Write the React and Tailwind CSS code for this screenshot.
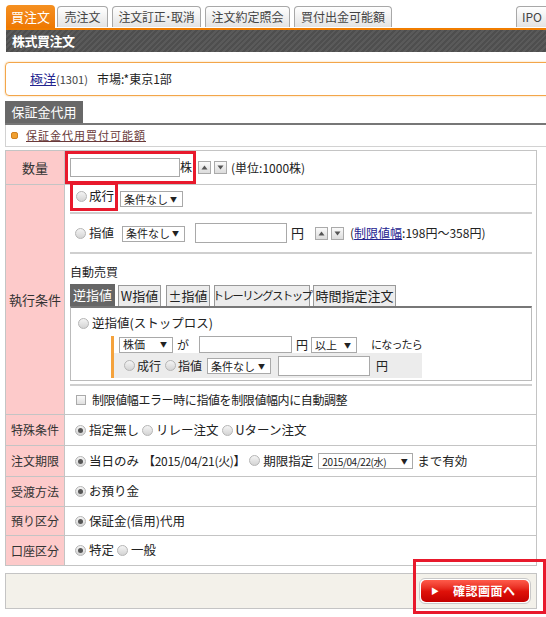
import React from 'react';

const Radio = ({ checked }) => (
  <span className="inline-flex items-center justify-center w-[11px] h-[11px] rounded-full border border-[#b5b5b5] bg-linear-to-b from-[#f4f4f4] to-[#d4d4d4] shrink-0">
    {checked && <span className="w-[5px] h-[5px] rounded-full bg-[#555]"></span>}
  </span>
);

const Select = ({ label, w, small }) => (
  <span
    className={`inline-flex items-center justify-between h-[16px] border border-[#a9a9a9] bg-white pl-[3px] pr-[5px] text-[#222] whitespace-nowrap shrink-0 ${small ? 'text-[10px] tracking-[-0.4px]' : 'text-[11px]'} ${w}`}
  >
    <span>{label}</span>
    <span className="text-[7px]">▼</span>
  </span>
);

const Spin = ({ up }) => (
  <span className="inline-flex items-center justify-center w-[13px] h-[13px] border border-[#aaa] bg-linear-to-b from-[#fafafa] to-[#dcdcdc] shrink-0">
    <svg width="7" height="5" viewBox="0 0 7 5">
      {up ? <path d="M0.5 4.5 L3.5 0.5 L6.5 4.5 Z" fill="#555" /> : <path d="M0.5 0.5 L3.5 4.5 L6.5 0.5 Z" fill="#555" />}
    </svg>
  </span>
);

const Tab = ({ children, active, className = '' }) => (
  <div
    className={`shrink-0 whitespace-nowrap flex items-center justify-center rounded-t-[4px] leading-none ${
      active
        ? 'h-[23px] bg-linear-to-b from-[#f59020] to-[#ee7800] text-white text-[13px]'
        : 'h-[21px] mb-[1px] border border-b-0 border-[#a8a8a8] bg-linear-to-b from-white to-[#e3e3e3] text-[#444] text-[12px]'
    } ${className}`}
  >
    {children}
  </div>
);

// h is the label cell height; the bottom border adds 1px
const Row = ({ label, h, children, last, small }) => (
  <div className={`flex ${last ? '' : 'border-b border-[#c4c4c4]'}`}>
    <div className={`w-[59px] shrink-0 bg-[#fdcaca] border-r border-[#c4c4c4] flex items-center justify-center text-[#333] whitespace-nowrap ${small ? 'text-[12px]' : 'text-[13px]'} ${h}`}>
      {label}
    </div>
    <div className="flex-1 min-w-0">{children}</div>
  </div>
);

export default function App() {
  return (
    <div className="w-[546px] h-[617px] overflow-hidden bg-white text-[#222] font-['Meiryo','Noto_Sans_CJK_JP',sans-serif] text-[12px]">
      <div className="pl-[6px] w-[570px]">
        {/* Tabs */}
        <div className="flex items-end h-[28px]">
          <Tab active className="w-[49px]">買注文</Tab>
          <Tab className="ml-[2px] w-[51px]">売注文</Tab>
          <Tab className="ml-[4px] w-[89px] tracking-[-0.3px]">注文訂正･取消</Tab>
          <Tab className="ml-[4px] w-[85px]">注文約定照会</Tab>
          <Tab className="ml-[4px] w-[98px]">買付出金可能額</Tab>
          <Tab className="ml-[124px] w-[44px] justify-start pl-[5px]">IPO</Tab>
        </div>
        {/* Header bar */}
        <div className="h-[24px] border-t-[2px] border-[#f07d00] bg-[repeating-linear-gradient(135deg,#5a5a5a_0px,#5a5a5a_2px,#4e4e4e_2px,#4e4e4e_4px)] flex items-center pl-[6px]">
          <span className="text-white font-bold text-[13px] tracking-[-0.5px]">株式買注文</span>
        </div>
      </div>

      <div className="pl-[5px] w-[570px]">
        {/* Stock info */}
        <div className="mt-[10px] h-[34px] border border-[#f3a64a] rounded-[4px] flex items-center pl-[24px] shadow-[0_0_2px_#f8c98a]">
          <span className="text-[#24248f] underline text-[13px]">極洋</span>
          <span className="text-[11px] text-[#444]">(1301)</span>
          <span className="ml-[9px] text-[12px] text-[#222]">市場:*東京1部</span>
        </div>

        {/* Sub tab */}
        <div className="mt-[5px] border-b-[2px] border-[#777]">
          <div className="w-[78px] h-[22px] bg-[#686868] text-white text-[13px] flex items-center justify-center">保証金代用</div>
        </div>
        <div className="h-[22px] border-x border-b border-[#d2d2d2] flex items-center pl-[5px]">
          <span className="w-[7px] h-[7px] rounded-[2px] bg-[#f0a030] border border-[#d08020]"></span>
          <span className="ml-[8px] text-[11px] text-[#6a3a3a] underline tracking-[1px]">保証金代用買付可能額</span>
        </div>
      </div>

      <div className="pl-[5px] w-[537px]">
        {/* Order table */}
        <div className="mt-[3px] border border-[#c4c4c4]">
          <Row label="数量" h="h-[33px]">
            <div className="h-full flex items-center whitespace-nowrap">
              <div className="-mt-[1px] h-[33px] border-[3px] border-[#e8192c] flex items-center pl-[2px] pr-[1px]">
                <span className="w-[110px] h-[19px] border border-[#a9a9a9] bg-white"></span>
                <span className="text-[12px] text-[#222]">株</span>
              </div>
              <span className="ml-[2px] flex gap-[3px]">
                <Spin up />
                <Spin />
              </span>
              <span className="ml-[4px] text-[12px] text-[#222]">(単位:1000株)</span>
            </div>
          </Row>

          <Row label="執行条件" h="h-[229px]">
            <div className="pl-[5px] pr-[4px] text-[13px] text-[#222] whitespace-nowrap">
              <div className="h-[27px] flex items-center">
                <div className="-mt-[4px] h-[29px] w-[48px] border-[3px] border-[#e8192c] flex items-center gap-[2px] pl-[3px]">
                  <Radio />
                  <span className="text-[12.5px]">成行</span>
                </div>
                <span className="ml-[2px]"><Select label="条件なし" w="w-[63px]" /></span>
              </div>
              <div className="h-[2px] bg-[#cfcfcf]"></div>
              <div className="h-[38px] flex items-center pl-[5px]">
                <Radio />
                <span className="ml-[3px] text-[12.5px]">指値</span>
                <span className="ml-[8px]"><Select label="条件なし" w="w-[63px]" /></span>
                <span className="ml-[10px] w-[92px] h-[20px] border border-[#a9a9a9] bg-white"></span>
                <span className="ml-[4px]">円</span>
                <span className="ml-[11px] flex gap-[3px]">
                  <Spin up />
                  <Spin />
                </span>
                <span className="ml-[6px] text-[12px]">(<span className="text-[#24248f] underline">制限値幅</span>:198円～358円)</span>
              </div>
              <div className="h-[2px] bg-[#cfcfcf]"></div>
              <div className="pt-[10px] text-[12px] leading-[16px]">自動売買</div>
              <div className="mt-[4px] flex items-end gap-[3px]">
                <div className="w-[45px] h-[22px] bg-[#666] text-white flex items-center justify-center">逆指値</div>
                <div className="w-[43px] h-[21px] bg-[#ececec] border border-b-0 border-[#999] flex items-center justify-center">W指値</div>
                <div className="ml-[2px] w-[44px] h-[21px] bg-[#ececec] border border-b-0 border-[#999] flex items-center justify-center">±指値</div>
                <div className="ml-[1px] w-[96px] h-[21px] bg-[#ececec] border border-b-0 border-[#999] flex items-center justify-center text-[11.5px] tracking-[-1.6px]">トレーリングストップ</div>
                <div className="w-[83px] h-[21px] bg-[#ececec] border border-b-0 border-[#999] flex items-center justify-center">時間指定注文</div>
              </div>
              <div className="border-t-[2px] border-[#777] border-x border-b border-x-[#bbb] border-b-[#bbb] h-[75px] pt-[6px]">
                <div className="flex items-center pl-[7px] h-[18px]">
                  <Radio />
                  <span className="ml-[3px] text-[12.5px]">逆指値(ストップロス)</span>
                </div>
                <div className="ml-[40px] mt-[4px] border-l-[3px] border-[#f4a23c] w-[311px] text-[12px]">
                  <div className="h-[17px] flex items-center pl-[5px]">
                    <Select label="株価" w="w-[54px]" />
                    <span className="ml-[4px]">が</span>
                    <span className="ml-[10px] w-[93px] h-[17px] border border-[#a9a9a9] bg-white"></span>
                    <span className="ml-[4px]">円</span>
                    <span className="ml-[3px]"><Select label="以上" w="w-[46px]" /></span>
                    <span className="ml-[14px] text-[11px] tracking-[-0.8px]">になったら</span>
                  </div>
                  <div className="h-[25px] bg-[#ececec] flex items-center pl-[10px]">
                    <Radio />
                    <span className="ml-[2px]">成行</span>
                    <span className="ml-[4px]"><Radio /></span>
                    <span className="ml-[2px]">指値</span>
                    <span className="ml-[5px]"><Select label="条件なし" w="w-[64px]" /></span>
                    <span className="ml-[7px] w-[92px] h-[20px] border border-[#a9a9a9] bg-white"></span>
                    <span className="ml-[6px]">円</span>
                  </div>
                </div>
              </div>
              <div className="mt-[3px] h-[2px] bg-[#cfcfcf]"></div>
              <div className="h-[28px] flex items-center pl-[6px] text-[12px]">
                <span className="w-[10px] h-[10px] border border-[#aaa] bg-linear-to-b from-[#fafafa] to-[#e0e0e0]"></span>
                <span className="ml-[6px] tracking-[-0.4px]">制限値幅エラー時に指値を制限値幅内に自動調整</span>
              </div>
            </div>
          </Row>

          <Row label="特殊条件" h="h-[30px]" small>
            <div className="h-full flex items-center pl-[10px] text-[12.5px] text-[#222] gap-[3px] whitespace-nowrap">
              <Radio checked />
              <span>指定無し</span>
              <Radio />
              <span>リレー注文</span>
              <Radio />
              <span>Uターン注文</span>
            </div>
          </Row>
          <Row label="注文期限" h="h-[30px]" small>
            <div className="h-full flex items-center pl-[10px] text-[12.5px] text-[#222] whitespace-nowrap">
              <Radio checked />
              <span className="ml-[3px]">当日のみ</span>
              <span className="ml-[4px] text-[12px] tracking-[-0.3px]">【2015/04/21(火)】</span>
              <span className="ml-[4px]"><Radio /></span>
              <span className="ml-[3px]">期限指定</span>
              <span className="ml-[5px]"><Select label="2015/04/22(水)" w="w-[95px]" small /></span>
              <span className="ml-[4px]">まで有効</span>
            </div>
          </Row>
          <Row label="受渡方法" h="h-[29px]" small>
            <div className="h-full flex items-center pl-[10px] text-[12.5px] text-[#222] gap-[3px]">
              <Radio checked />
              <span>お預り金</span>
            </div>
          </Row>
          <Row label="預り区分" h="h-[28px]" small>
            <div className="h-full flex items-center pl-[10px] text-[12.5px] text-[#222] gap-[3px]">
              <Radio checked />
              <span>保証金(信用)代用</span>
            </div>
          </Row>
          <Row label="口座区分" h="h-[29px]" small last>
            <div className="h-full flex items-center pl-[10px] text-[12.5px] text-[#222] gap-[3px]">
              <Radio checked />
              <span>特定</span>
              <Radio />
              <span>一般</span>
            </div>
          </Row>
        </div>

        {/* Footer */}
        <div className="relative mt-[7px] h-[36px] bg-[#f3f1ea] border border-[#c4c4c4] flex items-center justify-end pr-[5px]">
          <div className="p-[1px] rounded-[6px] border border-[#c8c8c8] bg-white">
            <div className="w-[108px] h-[22px] rounded-[5px] bg-linear-to-b from-[#ff5a4a] via-[#e0120a] to-[#c40000] flex items-center pl-[10px] text-white text-[12px] font-bold">
              <span className="text-[8px]">▶</span>
              <span className="ml-[14px] tracking-[0.5px]">確認画面へ</span>
            </div>
          </div>
          <div className="absolute left-[407px] top-[-15px] w-[133px] h-[55px] border-[3px] border-[#e8192c]"></div>
        </div>
      </div>
    </div>
  );
}
